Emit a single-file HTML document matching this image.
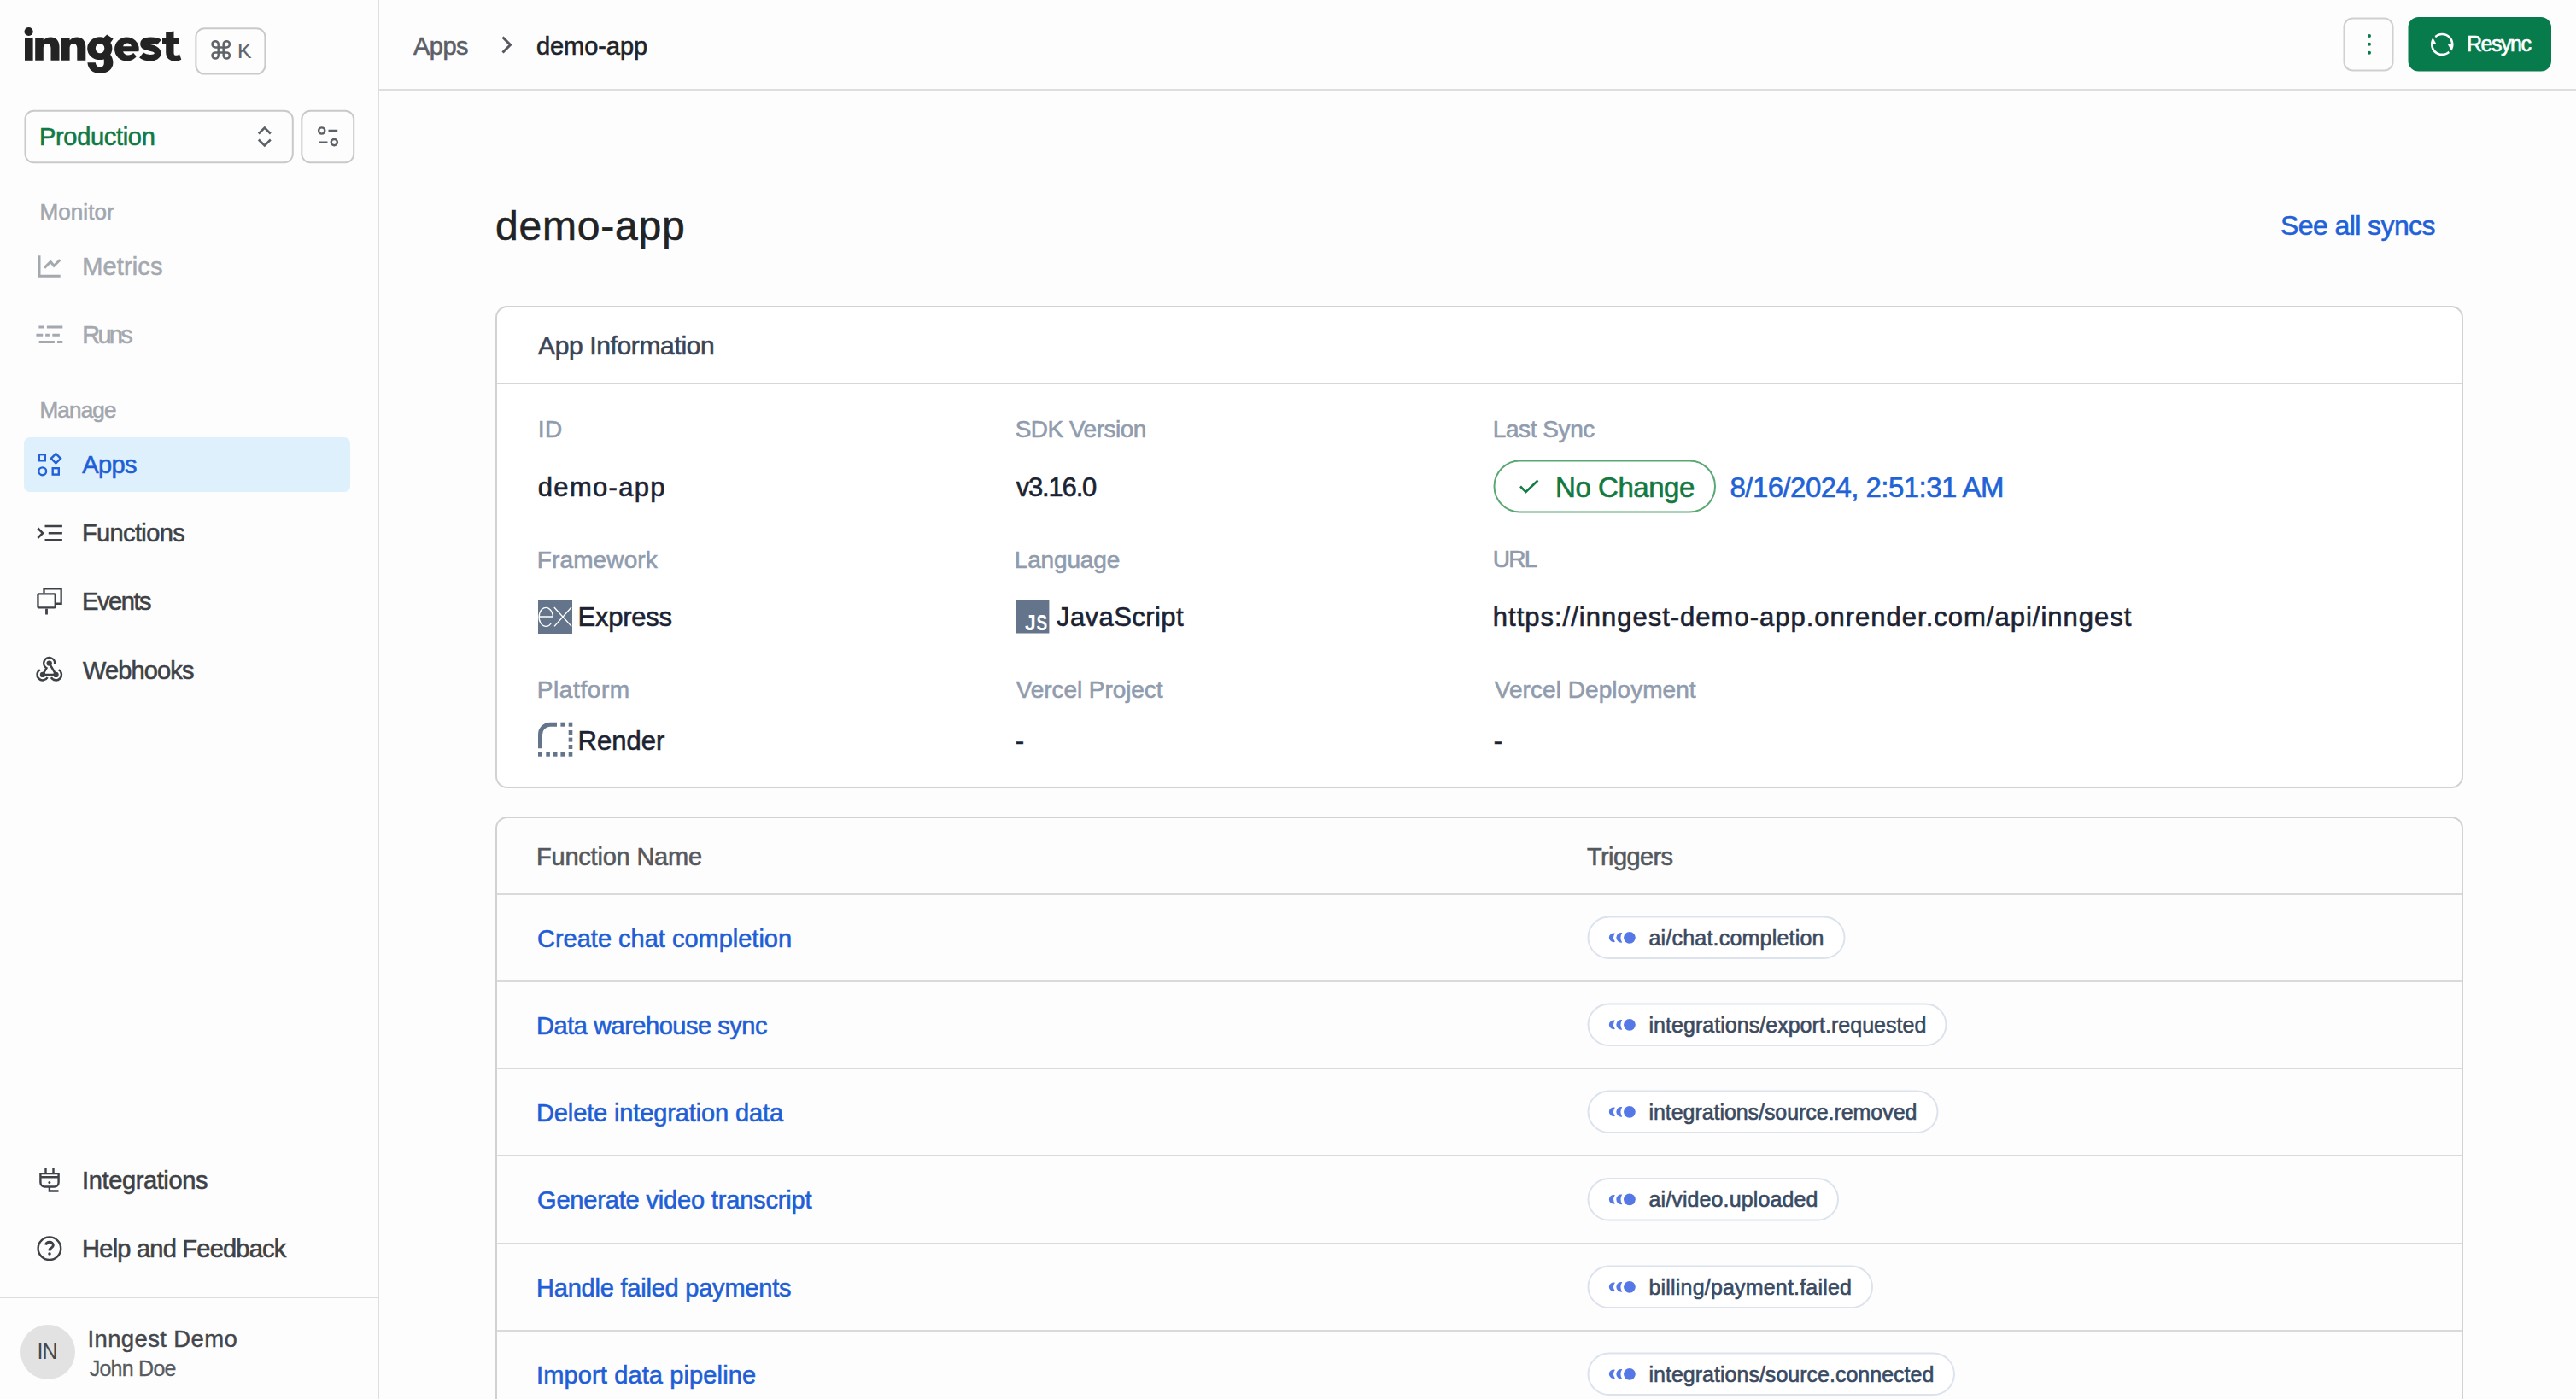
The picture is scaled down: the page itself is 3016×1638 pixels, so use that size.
<!DOCTYPE html>
<html><head><meta charset="utf-8"><title>demo-app</title>
<style>html,body{margin:0;padding:0;background:#fdfdfd;overflow:hidden} svg{display:block} text{font-family:"Liberation Sans",sans-serif;white-space:pre}</style>
</head><body>
<svg width="3016" height="1638" viewBox="0 0 3016 1638">
<rect x="0" y="0" width="3016" height="1638" fill="#fdfdfd"/>
<rect x="442" y="0" width="2" height="1638" fill="#dedede"/>
<rect x="444" y="104" width="2572" height="2" fill="#dedede"/>
<rect x="0" y="1518" width="442" height="2" fill="#dedede"/>
<g fill="#232323"><circle cx="33.6" cy="37" r="5.1"/><rect x="29" y="44.3" width="9.6" height="26.5"/><path d="M41.2,70.8 V44.3 H50.800000000000004 V47.2 C52.7,44.8 55.7,43.4 59.400000000000006,43.4 C65.7,43.4 69.5,47.8 69.5,54.5 V70.8 H59.5 V56.5 C59.5,53 57.800000000000004,50.9 55.2,50.9 C52.6,50.9 50.800000000000004,53 50.800000000000004,56.5 V70.8 Z"/><path d="M72.0,70.8 V44.3 H81.6 V47.2 C83.5,44.8 86.5,43.4 90.2,43.4 C96.5,43.4 100.3,47.8 100.3,54.5 V70.8 H90.3 V56.5 C90.3,53 88.6,50.9 86.0,50.9 C83.4,50.9 81.6,53 81.6,56.5 V70.8 Z"/><path fill-rule="evenodd" d="M102.2,56.7 A14.6,13.4 0 1 0 131.4,56.7 A14.6,13.4 0 1 0 102.2,56.7 Z M111.9,56.6 A5.2,5.7 0 1 1 122.3,56.6 A5.2,5.7 0 1 1 111.9,56.6 Z"/><path d="M121.5,44 L125.2,40.6 L132.6,45.4 L129,50.5 Z"/><path d="M121.3,66 C121.8,68.5 121.8,71.5 121.8,74 C121.8,77 119.8,78.6 117,78.6 C114.2,78.6 112.2,76.8 111.8,73.3 H102.4 C103,81 108.6,86 117,86 C126,86 132.4,81 132.4,73.5 C132.4,69.5 131,66 128.5,63 Z"/><ellipse cx="148.4" cy="57.5" rx="14.3" ry="14"/><path fill="#fdfdfd" d="M144.1,54.2 C144.8,51.8 146.5,50.5 149,50.5 C151.5,50.5 153.3,51.8 153.9,54.2 Z"/><path fill="#fdfdfd" d="M144.1,60.3 H165 V66 L160.9,67.3 L156.2,62.1 C154.5,63.8 152.5,64.5 150,64.5 C147,64.5 144.8,63 144.1,60.3 Z"/><path d="M194.2,38 L203.5,36.6 V44.4 H209.8 V51.7 H203.5 V62 C203.5,64 204.5,64.8 206,64.8 C207.5,64.8 209,64.3 210.2,63.4 L212.3,69.8 C210,71 207.8,71.6 205.5,71.6 C198.5,71.6 194.2,68 194.2,61 V51.7 H190 V44.4 H194.2 Z"/></g><path fill="none" stroke="#232323" stroke-width="7.6" d="M186.3,49.6 C183.5,47.2 180,47.3 176,47.3 C171.5,47.3 168,48.6 168,51.5 C168,57.5 184.6,54 184.6,62.3 C184.6,65.8 181,67.7 176,67.7 C171.5,67.7 168,66.5 165.5,64.5"/>
<rect x="229.4" y="33.2" width="81" height="53.4" rx="10" fill="none" stroke="#cacaca" stroke-width="2"/>
<g fill="none" stroke="#606369" stroke-width="2.5" stroke-linejoin="round"><path d="M255.7,55.4 V51.8 A3.6,3.6 0 1 0 252.1,55.4 Z"/><path d="M261.7,55.4 V51.8 A3.6,3.6 0 1 1 265.3,55.4 Z"/><path d="M255.7,61.4 V65 A3.6,3.6 0 1 1 252.1,61.4 Z"/><path d="M261.7,61.4 V65 A3.6,3.6 0 1 0 265.3,61.4 Z"/><path d="M255.7,55.4 V61.4 M261.7,55.4 V61.4 M255.7,55.4 H261.7 M255.7,61.4 H261.7"/></g>
<rect x="29.5" y="129.7" width="313.3" height="60.6" rx="10" fill="none" stroke="#c9c9c9" stroke-width="2"/>
<path d="M302.8,156.5 L309.8,149.6 L316.8,156.5 M302.8,163.5 L309.8,170.4 L316.8,163.5" fill="none" stroke="#5c6168" stroke-width="2.6"/>
<rect x="353.3" y="129.7" width="60.9" height="60.6" rx="10" fill="none" stroke="#c9c9c9" stroke-width="2"/>
<g fill="none" stroke="#5c6168" stroke-width="2.4"><circle cx="376.7" cy="153" r="3.6"/><path d="M384.5,153 H395.2 M373,166.6 H383.5"/><circle cx="391.3" cy="166.6" r="3.6"/></g>
<g fill="none" stroke="#a4a9b0" stroke-width="3"><path d="M46,299.3 V323.2 H70.7"/><path d="M52,313.6 L59.2,306.5 L63.2,311.3 L70.3,304.3"/></g>
<g fill="none" stroke="#a4a9b0" stroke-width="3"><path d="M45.4,383 H51.4 M54.9,383 H73.3 M42.4,392.3 H50.2 M53.2,392.3 H57.9 M61.3,392.3 H69.9 M45.7,400.5 H63.9 M67,400.5 H73.3"/></g>
<rect x="28" y="512" width="382" height="64" rx="7" fill="#dff0fd"/>
<g fill="none" stroke="#2261d8" stroke-width="2.4"><rect x="45.8" y="532.2" width="7" height="7.1"/><path d="M65.4,531.2 L71,536.8 L65.4,542.4 L59.8,536.8 Z"/><circle cx="49.7" cy="551.8" r="4.4"/><rect x="61.7" y="548.2" width="7.1" height="7.4"/></g>
<g fill="none" stroke="#3e4247" stroke-width="2.6"><path d="M44.3,618.5 L50,624.2 L44.3,629.9"/><path d="M52.5,616 H72.9 M56.8,624.2 H72.9 M52.5,632.2 H72.9"/></g>
<g fill="none" stroke="#3e4247" stroke-width="2.3"><path d="M51.5,694.2 V689.35 H71.65 V706.75 H65.9"/><rect x="44.45" y="695.35" width="20.3" height="16.1" rx="1"/><path d="M54.5,712.6 V719.5" stroke-width="2.8"/></g>
<g fill="none" stroke="#3e4247" stroke-width="2.5"><path d="M50,789.9 L54.45,782.23 A6.5,6.5 0 1 1 64.1,777.73"/><path d="M46.75,784.27 A6.5,6.5 0 1 0 55.63,793.15"/><path d="M59.87,793.15 A6.5,6.5 0 1 0 68.75,784.27"/><path d="M57.7,776.6 L65.5,789.9 M50,789.9 H65.5"/></g><g fill="#3e4247"><circle cx="57.7" cy="776.6" r="3.2"/><circle cx="50" cy="789.9" r="3.2"/><circle cx="65.5" cy="789.9" r="3.2"/></g>
<g fill="none" stroke="#3e4247" stroke-width="2.4"><path d="M53.5,1367 V1373 M62.5,1367 V1373 M47.4,1378.2 H68.6"/><path d="M47.4,1374.1 H68.6 V1384.5 A5,5 0 0 1 63.6,1389.5 H52.4 A5,5 0 0 1 47.4,1384.5 Z"/><path d="M57.9,1389.5 V1394.5 H68.5"/></g><circle cx="57.9" cy="1384.4" r="1.5" fill="#3e4247"/>
<g fill="none" stroke="#3e4247" stroke-width="2.4"><circle cx="57.9" cy="1461.7" r="13.3"/><path d="M53.6,1457.6 C54,1455.5 55.7,1454.3 58,1454.3 C60.5,1454.3 62.3,1455.8 62.3,1458 C62.3,1460.6 59.3,1461 58.2,1462.6 V1464.6" stroke-width="3"/></g><circle cx="58" cy="1468" r="1.8" fill="#3e4247"/>
<circle cx="56" cy="1583" r="32" fill="#e2e2e2"/>
<path d="M588.5,43.5 L597.5,52.5 L588.5,61.5" fill="none" stroke="#55595f" stroke-width="3"/>
<rect x="2744.5" y="21.5" width="57" height="61" rx="10" fill="none" stroke="#d0d0d0" stroke-width="2"/>
<g fill="#0b7a48"><circle cx="2774" cy="41.9" r="2"/><circle cx="2774" cy="51.8" r="2"/><circle cx="2774" cy="61.8" r="2"/></g>
<rect x="2819.5" y="20" width="167.5" height="63.5" rx="12" fill="#077b4c"/>
<g transform="translate(2843.3,36) scale(1.33)"><path fill="#fff" d="M5.46257 4.43262C7.21556 2.91688 9.5007 2 12 2C17.5228 2 22 6.47715 22 12C22 14.1361 21.3302 16.1158 20.1892 17.7406L17 12H20C20 7.58172 16.4183 4 12 4C9.84982 4 7.89777 4.84827 6.46023 6.22842L5.46257 4.43262ZM18.5374 19.5674C16.7844 21.0831 14.4993 22 12 22C6.47715 22 2 17.5228 2 12C2 9.86386 2.66979 7.88416 3.8108 6.25944L7 12H4C4 16.4183 7.58172 20 12 20C14.1502 20 16.1022 19.1517 17.5398 17.7716L18.5374 19.5674Z"/></g>
<rect x="581" y="359" width="2302" height="563" rx="13" fill="#ffffff" stroke="#d2d2d2" stroke-width="2"/>
<rect x="582" y="448" width="2300" height="2" fill="#d6d6d6"/>
<rect x="1749.5" y="539.5" width="258.5" height="60" rx="30" fill="none" stroke="#5ba874" stroke-width="2"/>
<path d="M1780,569.5 L1786.5,576 L1800.5,562.5" fill="none" stroke="#137b43" stroke-width="2.6"/>
<rect x="630" y="702" width="40" height="40" fill="#64748b"/>
<g fill="none" stroke="#fff" stroke-width="1.4"><path d="M631.2,722 H647.3 A8.1,11 0 1 0 645.4,729.5"/><path d="M648.8,711 L669.2,733.4 M669,711 L649,733.4"/></g>
<rect x="1189.4" y="702.5" width="39" height="39" fill="#64748b"/>
<path d="M632.5,876.2 V860 A11.5,11.5 0 0 1 644,848.2 H652" fill="none" stroke="#64748b" stroke-width="5"/>
<g fill="#64748b"><rect x="656.4" y="845.7" width="4.6" height="5"/><rect x="665.7" y="845.7" width="4.6" height="5"/><rect x="665.7" y="855" width="4.6" height="5"/><rect x="665.7" y="863.6" width="4.6" height="5"/><rect x="665.7" y="872" width="4.6" height="5"/><rect x="630" y="880.7" width="4.6" height="5"/><rect x="639.3" y="880.7" width="4.6" height="5"/><rect x="647.9" y="880.7" width="4.6" height="5"/><rect x="656.4" y="880.7" width="4.6" height="5"/><rect x="665.7" y="880.7" width="4.6" height="5"/></g>
<rect x="581" y="957" width="2302" height="900" rx="13" fill="none" stroke="#d2d2d2" stroke-width="2"/>
<rect x="582" y="1046" width="2300" height="2" fill="#dadada"/>
<rect x="582" y="1148" width="2300" height="2" fill="#dadada"/>
<rect x="582" y="1250" width="2300" height="2" fill="#dadada"/>
<rect x="582" y="1352" width="2300" height="2" fill="#dadada"/>
<rect x="582" y="1455" width="2300" height="2" fill="#dadada"/>
<rect x="582" y="1557" width="2300" height="2" fill="#dadada"/>
<rect x="1859.5" y="1073.5" width="300" height="48.5" rx="24.25" fill="#ffffff" stroke="#dce3ec" stroke-width="2"/>
<g fill="#5578e6"><circle cx="1907.9" cy="1097.8" r="6.9"/><path d="M1899.3,1092.0 A5.9,5.9 0 1 0 1899.3,1103.6 A10.7,10.7 0 0 1 1899.3,1092.0 Z"/><path d="M1890.9,1092.8 A5.3,5.3 0 1 0 1890.9,1102.8 A8.2,8.2 0 0 1 1890.9,1092.8 Z"/></g>
<rect x="1859.5" y="1175.5" width="419" height="48.5" rx="24.25" fill="#ffffff" stroke="#dce3ec" stroke-width="2"/>
<g fill="#5578e6"><circle cx="1907.9" cy="1199.8" r="6.9"/><path d="M1899.3,1194.0 A5.9,5.9 0 1 0 1899.3,1205.6 A10.7,10.7 0 0 1 1899.3,1194.0 Z"/><path d="M1890.9,1194.8 A5.3,5.3 0 1 0 1890.9,1204.8 A8.2,8.2 0 0 1 1890.9,1194.8 Z"/></g>
<rect x="1859.5" y="1277.5" width="409" height="48.5" rx="24.25" fill="#ffffff" stroke="#dce3ec" stroke-width="2"/>
<g fill="#5578e6"><circle cx="1907.9" cy="1301.8" r="6.9"/><path d="M1899.3,1296.0 A5.9,5.9 0 1 0 1899.3,1307.6 A10.7,10.7 0 0 1 1899.3,1296.0 Z"/><path d="M1890.9,1296.8 A5.3,5.3 0 1 0 1890.9,1306.8 A8.2,8.2 0 0 1 1890.9,1296.8 Z"/></g>
<rect x="1859.5" y="1380.0" width="292.5" height="48.5" rx="24.25" fill="#ffffff" stroke="#dce3ec" stroke-width="2"/>
<g fill="#5578e6"><circle cx="1907.9" cy="1404.3" r="6.9"/><path d="M1899.3,1398.5 A5.9,5.9 0 1 0 1899.3,1410.1 A10.7,10.7 0 0 1 1899.3,1398.5 Z"/><path d="M1890.9,1399.3 A5.3,5.3 0 1 0 1890.9,1409.3 A8.2,8.2 0 0 1 1890.9,1399.3 Z"/></g>
<rect x="1859.5" y="1482.5" width="332.5" height="48.5" rx="24.25" fill="#ffffff" stroke="#dce3ec" stroke-width="2"/>
<g fill="#5578e6"><circle cx="1907.9" cy="1506.8" r="6.9"/><path d="M1899.3,1501.0 A5.9,5.9 0 1 0 1899.3,1512.6 A10.7,10.7 0 0 1 1899.3,1501.0 Z"/><path d="M1890.9,1501.8 A5.3,5.3 0 1 0 1890.9,1511.8 A8.2,8.2 0 0 1 1890.9,1501.8 Z"/></g>
<rect x="1859.5" y="1584.5" width="428.5" height="48.5" rx="24.25" fill="#ffffff" stroke="#dce3ec" stroke-width="2"/>
<g fill="#5578e6"><circle cx="1907.9" cy="1608.8" r="6.9"/><path d="M1899.3,1603.0 A5.9,5.9 0 1 0 1899.3,1614.6 A10.7,10.7 0 0 1 1899.3,1603.0 Z"/><path d="M1890.9,1603.8 A5.3,5.3 0 1 0 1890.9,1613.8 A8.2,8.2 0 0 1 1890.9,1603.8 Z"/></g>
<text x="278.00" y="67.9" font-size="24.7" fill="#606369" stroke="#606369" stroke-width="0.2">K</text>
<text x="46.00" y="169.8" font-size="29" fill="#0f7a45" textLength="135.83" lengthAdjust="spacing" stroke="#0f7a45" stroke-width="0.6">Production</text>
<text x="46.50" y="256.5" font-size="26" fill="#a2a7ae" textLength="87.16" lengthAdjust="spacing" stroke="#a2a7ae" stroke-width="0.6">Monitor</text>
<text x="96.20" y="322" font-size="29" fill="#a4a9b0" textLength="94.30" lengthAdjust="spacing" stroke="#a4a9b0" stroke-width="0.6">Metrics</text>
<text x="96.20" y="402" font-size="29" fill="#a4a9b0" textLength="59.50" lengthAdjust="spacing" stroke="#a4a9b0" stroke-width="0.6">Runs</text>
<text x="46.50" y="489" font-size="26" fill="#a2a7ae" textLength="89.96" lengthAdjust="spacing" stroke="#a2a7ae" stroke-width="0.6">Manage</text>
<text x="96.30" y="554.3" font-size="29" fill="#1f5fd6" textLength="64.30" lengthAdjust="spacing" stroke="#1f5fd6" stroke-width="0.6">Apps</text>
<text x="95.90" y="634" font-size="29" fill="#3e4247" textLength="120.80" lengthAdjust="spacing" stroke="#3e4247" stroke-width="0.6">Functions</text>
<text x="96.10" y="714" font-size="29" fill="#3e4247" textLength="81.50" lengthAdjust="spacing" stroke="#3e4247" stroke-width="0.6">Events</text>
<text x="97.00" y="794.5" font-size="29" fill="#3e4247" textLength="130.50" lengthAdjust="spacing" stroke="#3e4247" stroke-width="0.6">Webhooks</text>
<text x="96.10" y="1392.3" font-size="29" fill="#3e4247" textLength="147.30" lengthAdjust="spacing" stroke="#3e4247" stroke-width="0.6">Integrations</text>
<text x="96.10" y="1472.2" font-size="29" fill="#3e4247" textLength="239.20" lengthAdjust="spacing" stroke="#3e4247" stroke-width="0.6">Help and Feedback</text>
<text x="43.40" y="1590.6" font-size="25" fill="#45484c" textLength="24.25" lengthAdjust="spacing">IN</text>
<text x="102.50" y="1576.5" font-size="27.5" fill="#43474c" textLength="175.29" lengthAdjust="spacing" stroke="#43474c" stroke-width="0.4">Inngest Demo</text>
<text x="104.70" y="1610.8" font-size="25" fill="#575b60" textLength="101.80" lengthAdjust="spacing" stroke="#575b60" stroke-width="0.3">John Doe</text>
<text x="484.00" y="64" font-size="29" fill="#5c6066" textLength="64.50" lengthAdjust="spacing" stroke="#5c6066" stroke-width="0.6">Apps</text>
<text x="628.00" y="64" font-size="29" fill="#202327" textLength="130.13" lengthAdjust="spacing" stroke="#202327" stroke-width="0.6">demo-app</text>
<text x="2888.00" y="60" font-size="25" fill="#ffffff" textLength="76.00" lengthAdjust="spacing" stroke="#ffffff" stroke-width="0.6">Resync</text>
<text x="579.90" y="281" font-size="48" fill="#222325" textLength="221.70" lengthAdjust="spacing" stroke="#222325" stroke-width="0.6">demo-app</text>
<text x="2670.00" y="275" font-size="32" fill="#1f62d8" textLength="181.50" lengthAdjust="spacing" stroke="#1f62d8" stroke-width="0.6">See all syncs</text>
<text x="630.00" y="415" font-size="30" fill="#3a4556" textLength="206.68" lengthAdjust="spacing" stroke="#3a4556" stroke-width="0.6">App Information</text>
<text x="629.80" y="512" font-size="28" fill="#909cae" textLength="28.42" lengthAdjust="spacing" stroke="#909cae" stroke-width="0.6">ID</text>
<text x="1188.70" y="512" font-size="28" fill="#909cae" textLength="153.57" lengthAdjust="spacing" stroke="#909cae" stroke-width="0.6">SDK Version</text>
<text x="1747.80" y="512" font-size="28" fill="#909cae" textLength="119.50" lengthAdjust="spacing" stroke="#909cae" stroke-width="0.6">Last Sync</text>
<text x="629.80" y="580.8" font-size="31" fill="#1b2333" textLength="148.74" lengthAdjust="spacing" stroke="#1b2333" stroke-width="0.6">demo-app</text>
<text x="1189.70" y="580.8" font-size="31" fill="#1b2333" textLength="94.64" lengthAdjust="spacing" stroke="#1b2333" stroke-width="0.6">v3.16.0</text>
<text x="1821.00" y="581.5" font-size="33" fill="#12793f" textLength="163.35" lengthAdjust="spacing" stroke="#12793f" stroke-width="0.6">No Change</text>
<text x="2025.50" y="581.5" font-size="33" fill="#2163d6" textLength="320.99" lengthAdjust="spacing" stroke="#2163d6" stroke-width="0.6">8/16/2024, 2:51:31 AM</text>
<text x="628.80" y="665" font-size="28" fill="#909cae" textLength="141.00" lengthAdjust="spacing" stroke="#909cae" stroke-width="0.6">Framework</text>
<text x="1187.70" y="665" font-size="28" fill="#909cae" textLength="123.57" lengthAdjust="spacing" stroke="#909cae" stroke-width="0.6">Language</text>
<text x="1747.80" y="664.3" font-size="28" fill="#909cae" textLength="52.57" lengthAdjust="spacing" stroke="#909cae" stroke-width="0.6">URL</text>
<text x="676.50" y="732.9" font-size="31" fill="#1b2333" textLength="110.50" lengthAdjust="spacing" stroke="#1b2333" stroke-width="0.6">Express</text>
<text x="1200.00" y="738.3" font-size="26.5" font-weight="700" fill="#ffffff" textLength="12.74" lengthAdjust="spacingAndGlyphs">J</text>
<text x="1213.50" y="738.3" font-size="26.5" font-weight="700" fill="#ffffff" textLength="12.68" lengthAdjust="spacingAndGlyphs">S</text>
<text x="1237.00" y="732.9" font-size="31" fill="#1b2333" textLength="148.61" lengthAdjust="spacing" stroke="#1b2333" stroke-width="0.6">JavaScript</text>
<text x="1747.80" y="732.9" font-size="31" fill="#1b2333" textLength="747.61" lengthAdjust="spacing" stroke="#1b2333" stroke-width="0.6">https://inngest-demo-app.onrender.com/api/inngest</text>
<text x="628.80" y="816.5" font-size="28" fill="#909cae" textLength="108.32" lengthAdjust="spacing" stroke="#909cae" stroke-width="0.6">Platform</text>
<text x="1189.70" y="816.5" font-size="28" fill="#909cae" textLength="171.78" lengthAdjust="spacing" stroke="#909cae" stroke-width="0.6">Vercel Project</text>
<text x="1749.80" y="816.5" font-size="28" fill="#909cae" textLength="235.78" lengthAdjust="spacing" stroke="#909cae" stroke-width="0.6">Vercel Deployment</text>
<text x="676.50" y="877.5" font-size="31" fill="#1b2333" textLength="101.82" lengthAdjust="spacing" stroke="#1b2333" stroke-width="0.6">Render</text>
<text x="1188.70" y="877.5" font-size="31" fill="#1b2333" stroke="#1b2333" stroke-width="0.6">-</text>
<text x="1748.80" y="877.5" font-size="31" fill="#1b2333" stroke="#1b2333" stroke-width="0.6">-</text>
<text x="628.00" y="1012.5" font-size="29" fill="#55595e" textLength="194.13" lengthAdjust="spacing" stroke="#55595e" stroke-width="0.6">Function Name</text>
<text x="1858.00" y="1012.5" font-size="29" fill="#55595e" textLength="101.00" lengthAdjust="spacing" stroke="#55595e" stroke-width="0.6">Triggers</text>
<text x="629.00" y="1109" font-size="29" fill="#1f5fd6" textLength="298.13" lengthAdjust="spacing" stroke="#1f5fd6" stroke-width="0.6">Create chat completion</text>
<text x="1930.50" y="1106.5" font-size="25" fill="#3a4a61" textLength="204.90" lengthAdjust="spacing" stroke="#3a4a61" stroke-width="0.6">ai/chat.completion</text>
<text x="628.00" y="1211" font-size="29" fill="#1f5fd6" textLength="270.50" lengthAdjust="spacing" stroke="#1f5fd6" stroke-width="0.6">Data warehouse sync</text>
<text x="1930.50" y="1208.5" font-size="25" fill="#3a4a61" textLength="324.90" lengthAdjust="spacing" stroke="#3a4a61" stroke-width="0.6">integrations/export.requested</text>
<text x="628.00" y="1312.5" font-size="29" fill="#1f5fd6" textLength="289.13" lengthAdjust="spacing" stroke="#1f5fd6" stroke-width="0.6">Delete integration data</text>
<text x="1930.50" y="1310.5" font-size="25" fill="#3a4a61" textLength="313.90" lengthAdjust="spacing" stroke="#3a4a61" stroke-width="0.6">integrations/source.removed</text>
<text x="629.00" y="1415" font-size="29" fill="#1f5fd6" textLength="321.56" lengthAdjust="spacing" stroke="#1f5fd6" stroke-width="0.6">Generate video transcript</text>
<text x="1930.50" y="1413.0" font-size="25" fill="#3a4a61" textLength="197.90" lengthAdjust="spacing" stroke="#3a4a61" stroke-width="0.6">ai/video.uploaded</text>
<text x="628.00" y="1517.5" font-size="29" fill="#1f5fd6" textLength="298.50" lengthAdjust="spacing" stroke="#1f5fd6" stroke-width="0.6">Handle failed payments</text>
<text x="1930.50" y="1515.5" font-size="25" fill="#3a4a61" textLength="237.40" lengthAdjust="spacing" stroke="#3a4a61" stroke-width="0.6">billing/payment.failed</text>
<text x="628.00" y="1620" font-size="29" fill="#1f5fd6" textLength="257.13" lengthAdjust="spacing" stroke="#1f5fd6" stroke-width="0.6">Import data pipeline</text>
<text x="1930.50" y="1617.5" font-size="25" fill="#3a4a61" textLength="333.90" lengthAdjust="spacing" stroke="#3a4a61" stroke-width="0.6">integrations/source.connected</text>
</svg>
</body></html>
